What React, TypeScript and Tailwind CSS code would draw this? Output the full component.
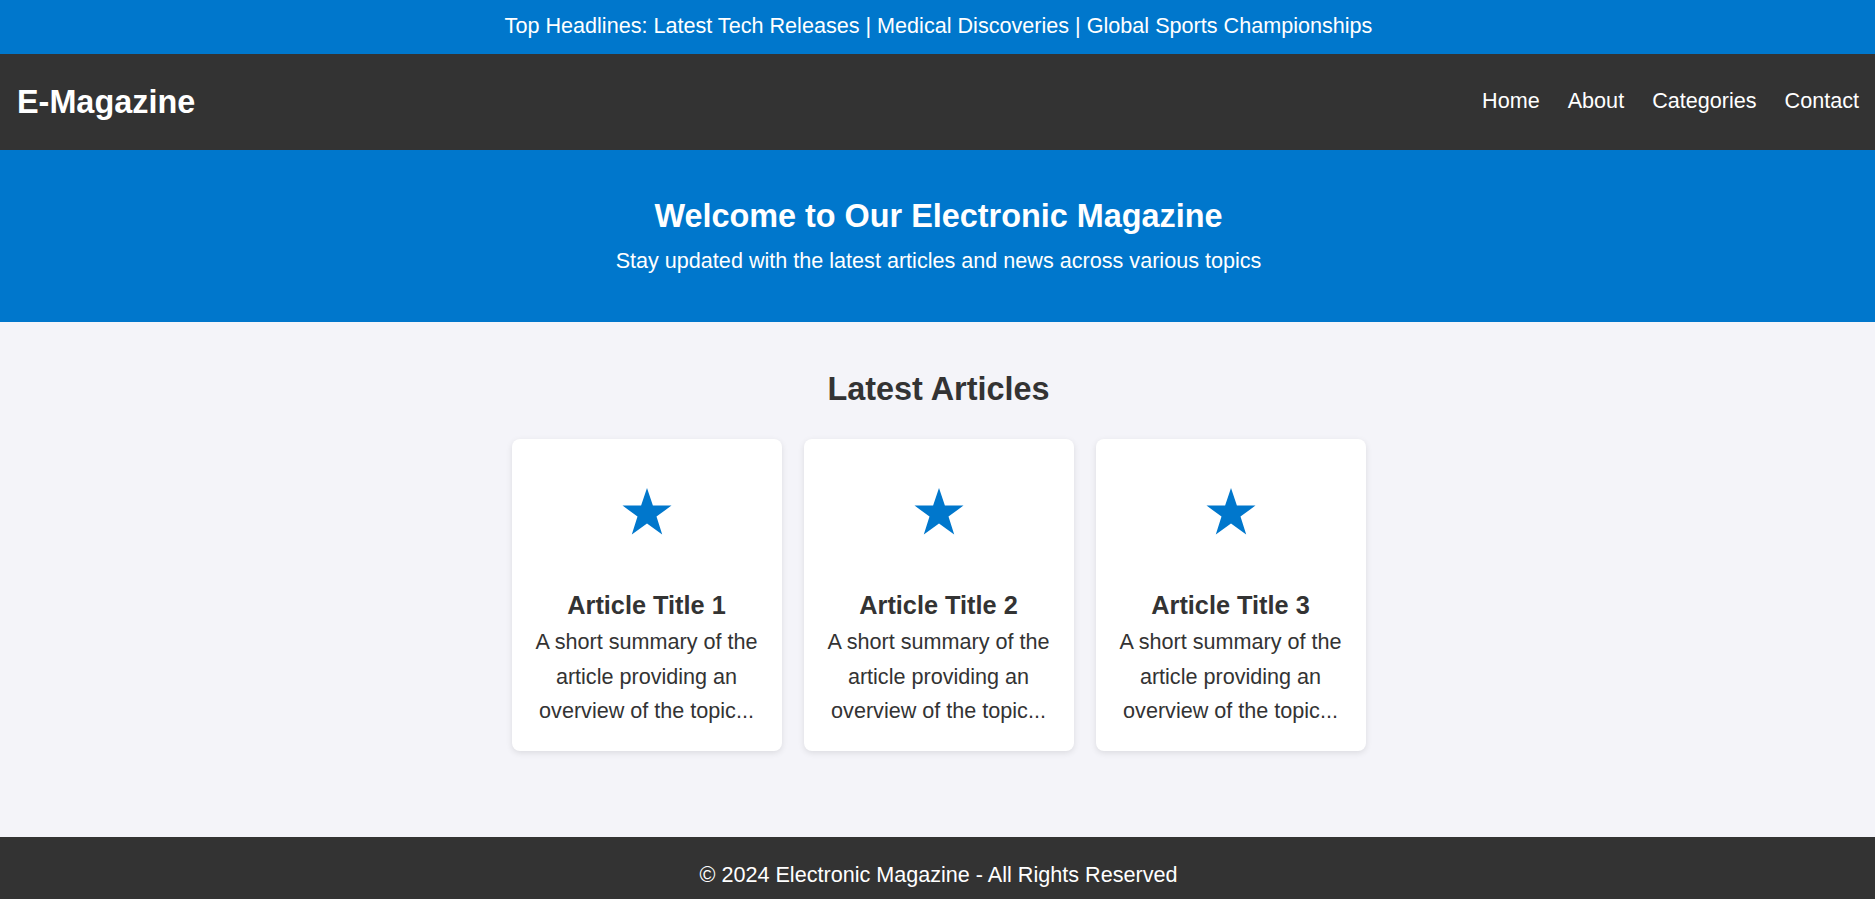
const articles = [
  { id: 1, title: "Article Title 1" },
  { id: 2, title: "Article Title 2" },
  { id: 3, title: "Article Title 3" },
];

const navLinks = ["Home", "About", "Categories", "Contact"];

function Star() {
  return (
    <svg width="50" height="48" viewBox="0 0 50 48" aria-hidden="true">
      <polygon
        points="25,0 30.9,17.6 49.5,17.6 34.5,28.5 40.2,46.5 25,35.5 9.8,46.5 15.5,28.5 0.5,17.6 19.1,17.6"
        fill="#0077cc"
      />
    </svg>
  );
}

export default function App() {
  return (
    <div className="min-h-screen bg-[#f4f4f9] font-['Liberation_Sans',Arial,sans-serif] text-[#333]">
      <div className="bg-[#0077cc] pt-[14px] pb-[16px] pl-[2px] text-center text-[21.6px] leading-[24px] text-white">
        Top Headlines: Latest Tech Releases | Medical Discoveries | Global Sports Championships
      </div>

      <header className="flex h-[96px] items-center justify-between bg-[#333] pl-[17px] pr-[16px] text-white">
        <h1 className="text-[32.4px] font-bold leading-[37px]">E-Magazine</h1>
        <nav className="flex gap-[28px] pb-[4px] text-[21.6px] leading-[25px]">
          {navLinks.map((link) => (
            <a key={link} href="#" className="text-white">
              {link}
            </a>
          ))}
        </nav>
      </header>

      <section className="bg-[#0077cc] pt-[48px] pb-[49px] pl-[2px] text-center text-white">
        <h2 className="text-[32.4px] font-bold leading-[37px]">
          Welcome to Our Electronic Magazine
        </h2>
        <p className="mt-[13px] text-[21.6px] leading-[25px]">
          Stay updated with the latest articles and news across various topics
        </p>
      </section>

      <main className="pt-[49px] pb-[86px] pl-[2px]">
        <h2 className="mb-[31px] text-center text-[32.4px] font-bold leading-[37px]">
          Latest Articles
        </h2>
        <div className="flex justify-center gap-[22px]">
          {articles.map((article) => (
            <div
              key={article.id}
              className="w-[270px] rounded-lg bg-white p-[22px] text-center shadow-[0_2px_6px_rgba(0,0,0,0.1)]"
            >
              <div className="flex h-[102px] items-center justify-center">
                <Star />
              </div>
              <h3 className="mt-[22px] text-[25.3px] font-bold leading-[40px]">
                {article.title}
              </h3>
              <p className="text-[21.6px] leading-[34.6px]">
                A short summary of the article providing an overview of the topic...
              </p>
            </div>
          ))}
        </div>
      </main>

      <footer className="bg-[#333] pt-[21px] pb-[20px] pl-[2px] text-center text-[21.6px] leading-[34px] text-white">
        © 2024 Electronic Magazine - All Rights Reserved
      </footer>
    </div>
  );
}
